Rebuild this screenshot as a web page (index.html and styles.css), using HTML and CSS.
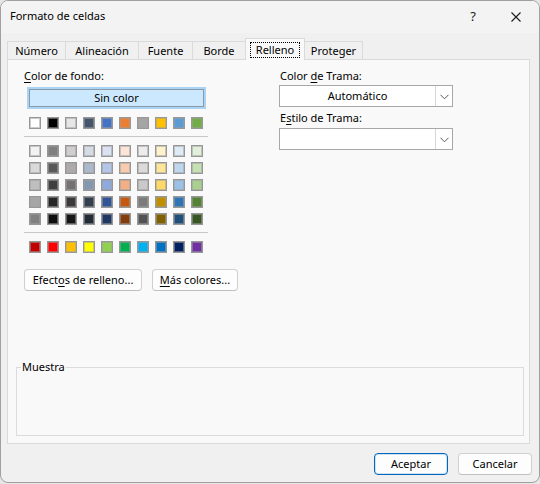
FILE: index.html
```html
<!DOCTYPE html>
<html lang="es">
<head>
<meta charset="utf-8">
<title>Formato de celdas</title>
<link rel="stylesheet" href="styles.css">
</head>
<body>
<div class="window">
  <div class="titlebar">
    <span class="title">Formato de celdas</span>
    <span class="help">?</span>
    <span class="close">
      <svg width="12" height="12" viewBox="0 0 12 12"><path d="M1.5 1.5 L10.5 10.5 M10.5 1.5 L1.5 10.5" stroke="#1a1a1a" stroke-width="1.1" fill="none"/></svg>
    </span>
  </div>
  <div class="tabs">
    <div class="tab t-numero">Número</div>
    <div class="tab t-alin">Alineación</div>
    <div class="tab t-fuente">Fuente</div>
    <div class="tab t-borde">Borde</div>
    <div class="tab t-relleno active"><span class="focus">Relleno</span></div>
    <div class="tab t-proteger">Proteger</div>
  </div>
  <div class="panel">
    <div class="cols">
      <div class="left">
        <div class="label"><u>C</u>olor de fondo:</div>
        <div class="nocolor"><span>Sin color</span></div>
        <div class="swrow">
          <div class="sw" style="background:#FFFFFF"></div>
          <div class="sw" style="background:#000000"></div>
          <div class="sw" style="background:#E7E6E6"></div>
          <div class="sw" style="background:#44546A"></div>
          <div class="sw" style="background:#4472C4"></div>
          <div class="sw" style="background:#ED7D31"></div>
          <div class="sw" style="background:#A5A5A5"></div>
          <div class="sw" style="background:#FFC000"></div>
          <div class="sw" style="background:#5B9BD5"></div>
          <div class="sw" style="background:#70AD47"></div>
        </div>
        <div class="sep"></div>
        <div class="swgrid">
          <div class="sw" style="background:#F2F2F2"></div>
          <div class="sw" style="background:#7F7F7F"></div>
          <div class="sw" style="background:#D0CECE"></div>
          <div class="sw" style="background:#D6DCE4"></div>
          <div class="sw" style="background:#D9E1F2"></div>
          <div class="sw" style="background:#FCE4D6"></div>
          <div class="sw" style="background:#EDEDED"></div>
          <div class="sw" style="background:#FFF2CC"></div>
          <div class="sw" style="background:#DDEBF7"></div>
          <div class="sw" style="background:#E2EFDA"></div>

          <div class="sw" style="background:#D9D9D9"></div>
          <div class="sw" style="background:#595959"></div>
          <div class="sw" style="background:#AEAAAA"></div>
          <div class="sw" style="background:#ACB9CA"></div>
          <div class="sw" style="background:#B4C6E7"></div>
          <div class="sw" style="background:#F8CBAD"></div>
          <div class="sw" style="background:#DBDBDB"></div>
          <div class="sw" style="background:#FFE699"></div>
          <div class="sw" style="background:#BDD7EE"></div>
          <div class="sw" style="background:#C6E0B4"></div>

          <div class="sw" style="background:#BFBFBF"></div>
          <div class="sw" style="background:#404040"></div>
          <div class="sw" style="background:#757171"></div>
          <div class="sw" style="background:#8497B0"></div>
          <div class="sw" style="background:#8EA9DB"></div>
          <div class="sw" style="background:#F4B084"></div>
          <div class="sw" style="background:#C9C9C9"></div>
          <div class="sw" style="background:#FFD966"></div>
          <div class="sw" style="background:#9BC2E6"></div>
          <div class="sw" style="background:#A9D08E"></div>

          <div class="sw" style="background:#A6A6A6"></div>
          <div class="sw" style="background:#262626"></div>
          <div class="sw" style="background:#3A3838"></div>
          <div class="sw" style="background:#333F4F"></div>
          <div class="sw" style="background:#305496"></div>
          <div class="sw" style="background:#C65911"></div>
          <div class="sw" style="background:#7B7B7B"></div>
          <div class="sw" style="background:#BF8F00"></div>
          <div class="sw" style="background:#2F75B5"></div>
          <div class="sw" style="background:#548235"></div>

          <div class="sw" style="background:#808080"></div>
          <div class="sw" style="background:#0D0D0D"></div>
          <div class="sw" style="background:#161616"></div>
          <div class="sw" style="background:#222B35"></div>
          <div class="sw" style="background:#203764"></div>
          <div class="sw" style="background:#833C0C"></div>
          <div class="sw" style="background:#525252"></div>
          <div class="sw" style="background:#806000"></div>
          <div class="sw" style="background:#1F4E78"></div>
          <div class="sw" style="background:#375623"></div>
        </div>
        <div class="sep"></div>
        <div class="swrow">
          <div class="sw" style="background:#C00000"></div>
          <div class="sw" style="background:#FF0000"></div>
          <div class="sw" style="background:#FFC000"></div>
          <div class="sw" style="background:#FFFF00"></div>
          <div class="sw" style="background:#92D050"></div>
          <div class="sw" style="background:#00B050"></div>
          <div class="sw" style="background:#00B0F0"></div>
          <div class="sw" style="background:#0070C0"></div>
          <div class="sw" style="background:#002060"></div>
          <div class="sw" style="background:#7030A0"></div>
        </div>
        <div class="btnrow">
          <div class="btn b-efectos">Efect<u>o</u>s de relleno...</div>
          <div class="btn b-mas"><u>M</u>ás colores...</div>
        </div>
      </div>
      <div class="right">
        <div class="label rlabel">Color <u>d</u>e Trama:</div>
        <div class="dd">
          <div class="dd-text">Automático</div>
          <div class="dd-btn">
            <svg width="9" height="6" viewBox="0 0 9 6"><path d="M0.5 0.8 L4.5 4.8 L8.5 0.8" stroke="#5a5a5a" stroke-width="1" fill="none"/></svg>
          </div>
        </div>
        <div class="label rlabel second">E<u>s</u>tilo de Trama:</div>
        <div class="dd dd2">
          <div class="dd-text"></div>
          <div class="dd-btn">
            <svg width="9" height="6" viewBox="0 0 9 6"><path d="M0.5 0.8 L4.5 4.8 L8.5 0.8" stroke="#5a5a5a" stroke-width="1" fill="none"/></svg>
          </div>
        </div>
      </div>
    </div>
    <div class="sample">
      <span class="sample-title">Muestra</span>
    </div>
  </div>
  <div class="footer">
    <div class="btn fbtn default">Aceptar</div>
    <div class="btn fbtn">Cancelar</div>
  </div>
</div>
</body>
</html>
```
FILE: styles.css
```css
html, body {
  margin: 0;
  padding: 0;
}
body {
  background: #e6e6e6;
  font-family: "Noto Sans", "Segoe UI", sans-serif;
  font-size: 11px;
  color: #000;
}
u {
  text-decoration: underline;
  text-underline-offset: 2px;
}

.window {
  width: 540px;
  height: 483px;
  box-sizing: border-box;
  border: 1px solid #a0a0a0;
  border-radius: 8px;
  background: #f0f0f0;
  display: flex;
  flex-direction: column;
  overflow: hidden;
}

/* title bar */
.titlebar {
  height: 32px;
  flex: none;
  display: flex;
  align-items: center;
  background: #f3f3f3;
  padding-left: 9px;
}
.title {
  flex: 1;
  line-height: 16px;
  padding-bottom: 2px;
}
.help {
  width: 40px;
  text-align: center;
  font-size: 13px;
  line-height: 16px;
  padding-bottom: 2px;
  color: #1a1a1a;
}
.close {
  width: 46px;
  height: 32px;
  display: flex;
  align-items: center;
  justify-content: center;
  padding-bottom: 1px;
  box-sizing: border-box;
}

/* tabs */
.tabs {
  height: 27px;
  flex: none;
  margin-bottom: -1px;
  display: flex;
  align-items: flex-end;
  padding-left: 6px;
  position: relative;
  z-index: 1;
}
.tab {
  box-sizing: border-box;
  height: 18px;
  margin-bottom: 1px;
  border: 1px solid #dadada;
  border-bottom: none;
  background: #f0f0f0;
  display: flex;
  align-items: center;
  justify-content: center;
  line-height: 16px;
  margin-left: -1px;
}
.tab:first-child {
  margin-left: 0;
}
.t-numero { width: 59px; }
.t-alin { width: 74px; }
.t-fuente { width: 55px; }
.t-borde { width: 54px; }
.t-relleno { width: 60px; }
.t-proteger { width: 59px; }
.tab.active {
  height: 22px;
  margin-bottom: 0;
  background: #f9f9f9;
  position: relative;
  z-index: 2;
  align-items: flex-start;
  padding-top: 3px;
}
.focus {
  display: inline-block;
  outline: 1px dotted #000;
  outline-offset: -1px;
  line-height: 16px;
  padding: 0 6px;
}

/* panel */
.panel {
  margin-left: 6px;
  width: 523px;
  height: 385px;
  box-sizing: border-box;
  border: 1px solid #dadada;
  background: #f9f9f9;
  padding: 8px 5px 7px 8px;
  display: flex;
  flex-direction: column;
  flex: none;
}
.cols {
  display: grid;
  grid-template-columns: 255px 174px;
  padding-left: 8px;
}
.label {
  line-height: 16px;
  height: 16px;
}
.nocolor {
  margin-top: 3px;
  margin-left: 3px;
  width: 179px;
  height: 22px;
  box-sizing: border-box;
  border: 2px solid #a9d4f5;
  box-shadow: inset 0 0 0 1px #8c9aa6;
  background: #cce8ff;
  display: flex;
  align-items: center;
  justify-content: center;
  line-height: 16px;
}
.swrow {
  margin-top: 8px;
  padding-left: 5px;
  display: flex;
  gap: 6px;
}
.swgrid {
  margin-top: 8px;
  padding-left: 5px;
  display: grid;
  grid-template-columns: repeat(10, 12px);
  column-gap: 6px;
  row-gap: 5px;
}
.sw {
  width: 12px;
  height: 12px;
  box-sizing: border-box;
  border: 1px solid #979797;
  box-shadow: inset 0 0 0 1px rgba(160, 160, 160, 0.55);
  flex: none;
}
.sep {
  margin-top: 7px;
  width: 184px;
  height: 1px;
  background: #c8c8c8;
}
.btnrow {
  margin-top: 16px;
  display: flex;
  gap: 10px;
}
.btn {
  height: 22px;
  box-sizing: border-box;
  border: 1px solid #d0d0d0;
  border-bottom-color: #c0c0c0;
  border-radius: 4px;
  background: #fdfdfd;
  display: flex;
  align-items: center;
  justify-content: center;
  line-height: 16px;
}
.b-efectos { width: 118px; }
.b-mas { width: 86px; }

.rlabel {
  padding-left: 1px;
}
.dd {
  margin-top: 1px;
  height: 22px;
  width: 174px;
  box-sizing: border-box;
  border: 1px solid #a8a8a8;
  background: #ffffff;
  display: flex;
}
.dd-text {
  flex: 1;
  display: flex;
  align-items: center;
  justify-content: center;
  line-height: 16px;
}
.dd-btn {
  width: 17px;
  box-sizing: border-box;
  border-left: 1px solid #d6d6d6;
  display: flex;
  align-items: center;
  justify-content: center;
  padding-top: 1px;
}
.rlabel.second {
  margin-top: 3px;
}
.dd2 {
  margin-top: 2px;
}

/* sample group */
.sample {
  margin-top: auto;
  height: 69px;
  box-sizing: border-box;
  border: 1px solid #dcdcdc;
}
.sample-title {
  display: inline-block;
  margin: -9px 0 0 4px;
  padding: 0 1px;
  background: #f9f9f9;
  line-height: 16px;
  vertical-align: top;
}

/* footer */
.footer {
  margin-top: 9px;
  display: flex;
  justify-content: flex-end;
  gap: 10px;
  padding-right: 7px;
}
.fbtn {
  width: 74px;
}
.btn.default {
  border: 1px solid #0067c0;
  box-shadow: inset 0 0 0 1px rgba(0, 103, 192, 0.18);
}
```
